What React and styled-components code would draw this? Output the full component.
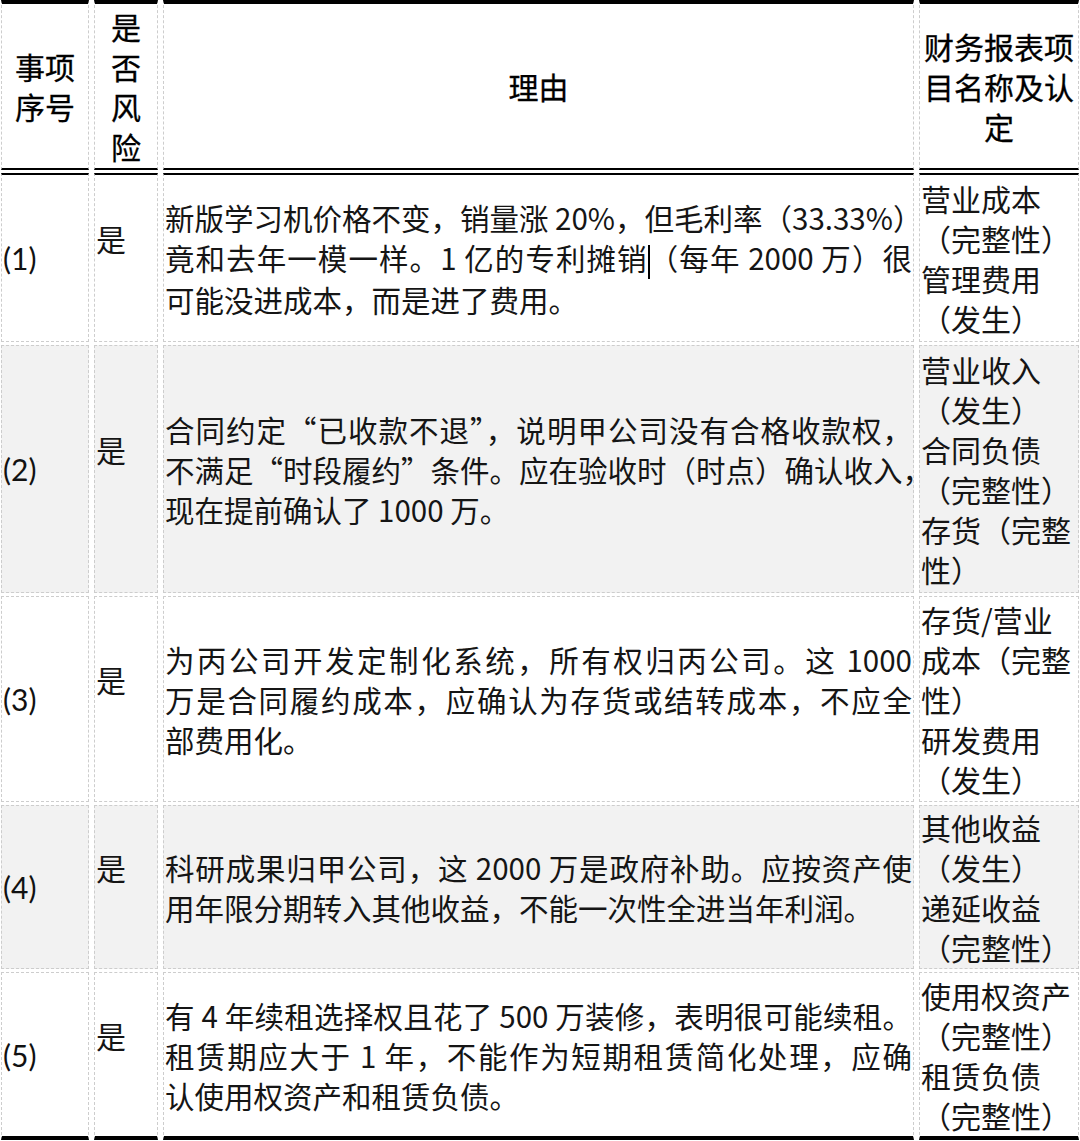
import React from 'react'
import styled, { createGlobalStyle } from 'styled-components'

const GlobalStyle = createGlobalStyle`
  html, body {
    margin: 0;
    padding: 0;
    background: #fff;
  }
  body {
    font-family: "Noto Sans CJK SC", sans-serif;
    color: #151515;
  }
`

// "|" inside a reason line marks where the text cursor sits
const rows = [
  {
    no: '(1)',
    pad: '3px 1px 3px',
    reason: [
      '新版学习机价格不变，销量涨 20%，但毛利率（33.33%）',
      '竟和去年一模一样。1 亿的专利摊销|（每年 2000 万）很',
      '可能没进成本，而是进了费用。',
    ],
    items: ['营业成本', '（完整性）', '管理费用', '（发生）'],
  },
  {
    no: '(2)',
    shade: true,
    pad: '3px 1px 3px',
    reason: [
      '合同约定“已收款不退”，说明甲公司没有合格收款权，',
      '不满足“时段履约”条件。应在验收时（时点）确认收入，',
      '现在提前确认了 1000 万。',
    ],
    items: ['营业收入', '（发生）', '合同负债', '（完整性）', '存货（完整性）'],
  },
  {
    no: '(3)',
    pad: '2px 1px 2px',
    reason: [
      '为丙公司开发定制化系统，所有权归丙公司。这 1000',
      '万是合同履约成本，应确认为存货或结转成本，不应全',
      '部费用化。',
    ],
    items: ['存货/营业成本（完整性）', '研发费用', '（发生）'],
  },
  {
    no: '(4)',
    shade: true,
    pad: '1px 1px 1px',
    reason: [
      '科研成果归甲公司，这 2000 万是政府补助。应按资产使',
      '用年限分期转入其他收益，不能一次性全进当年利润。',
    ],
    items: ['其他收益', '（发生）', '递延收益', '（完整性）'],
  },
  {
    no: '(5)',
    pad: '2px 1px 1px',
    reason: [
      '有 4 年续租选择权且花了 500 万装修，表明很可能续租。',
      '租赁期应大于 1 年，不能作为短期租赁简化处理，应确',
      '认使用权资产和租赁负债。',
    ],
    items: ['使用权资产', '（完整性）', '租赁负债', '（完整性）'],
  },
]

const topRule = (p) => {
  if (p.$head) return '4px solid #000'
  if (p.$first) return '2px solid #000'
  return '1px dashed #cdcdcd'
}

const bottomRule = (p) => {
  if (p.$head) return '2px solid #000'
  if (p.$last) return '4px solid #000'
  return '1px dashed #cdcdcd'
}

const Table = styled.div`
  display: grid;
  grid-template-columns: 88px 64px 751px 160px;
  column-gap: 5px;
  row-gap: 3px;
  width: 1080px;
  padding-left: 1px;
  box-sizing: border-box;
`

const Cell = styled.div`
  box-sizing: border-box;
  display: flex;
  flex-direction: column;
  justify-content: center;
  text-align: ${(p) => (p.$center ? 'center' : 'left')};
  background: ${(p) => (p.$shade ? '#f2f2f2' : '#fff')};
  border: 1px dashed #cdcdcd;
  border-top: ${topRule};
  border-bottom: ${bottomRule};
  padding: ${(p) => p.$pad || '2px'};
  font-size: 30px;
  line-height: 40px;
`

const HeadText = styled.div`
  color: #000;
  -webkit-text-stroke: 0.3px #000;
`

const Num = styled.div`
  font-family: Lato, "Noto Sans CJK SC", sans-serif;
  font-size: 30px;
  color: #111;
`

const Flag = styled.div`
  padding-bottom: 40px;
`

const ReasonLine = styled.div`
  font-size: 29.5px;
  white-space: nowrap;
  text-align: justify;
  text-align-last: ${(p) => (p.$fill ? 'justify' : 'left')};
`

const Caret = styled.span`
  display: inline-block;
  width: 2px;
  height: 34px;
  margin-right: -2px;
  background: #000;
  vertical-align: middle;
`

const Item = styled.div`
  white-space: normal;
`

const renderLine = (line) => {
  const parts = line.split('|')
  return parts.map((part, i) => (
    <React.Fragment key={i}>
      {i > 0 && <Caret />}
      {part}
    </React.Fragment>
  ))
}

const App = () => {
  return (
    <>
      <GlobalStyle />
      <Table>
        <Cell $head $center $pad="2px 3px">
          <HeadText>事项序号</HeadText>
        </Cell>
        <Cell $head $center $pad="2px 3px">
          <HeadText>是否风险</HeadText>
        </Cell>
        <Cell $head $center>
          <HeadText>理由</HeadText>
        </Cell>
        <Cell $head $center $pad="2px 1px">
          <HeadText>财务报表项目名称及认定</HeadText>
        </Cell>

        {rows.map((row, r) => {
          const edge = {
            $first: r === 0,
            $last: r === rows.length - 1,
            $shade: row.shade,
            $pad: row.pad,
          }
          return (
            <React.Fragment key={row.no}>
              <Cell {...edge}>
                <Num>{row.no}</Num>
              </Cell>
              <Cell {...edge}>
                <Flag>是</Flag>
              </Cell>
              <Cell {...edge}>
                {row.reason.map((line, i) => (
                  <ReasonLine key={i} $fill={i < row.reason.length - 1}>
                    {renderLine(line)}
                  </ReasonLine>
                ))}
              </Cell>
              <Cell {...edge}>
                {row.items.map((item, i) => (
                  <Item key={i}>{item}</Item>
                ))}
              </Cell>
            </React.Fragment>
          )
        })}
      </Table>
    </>
  )
}

export default App
